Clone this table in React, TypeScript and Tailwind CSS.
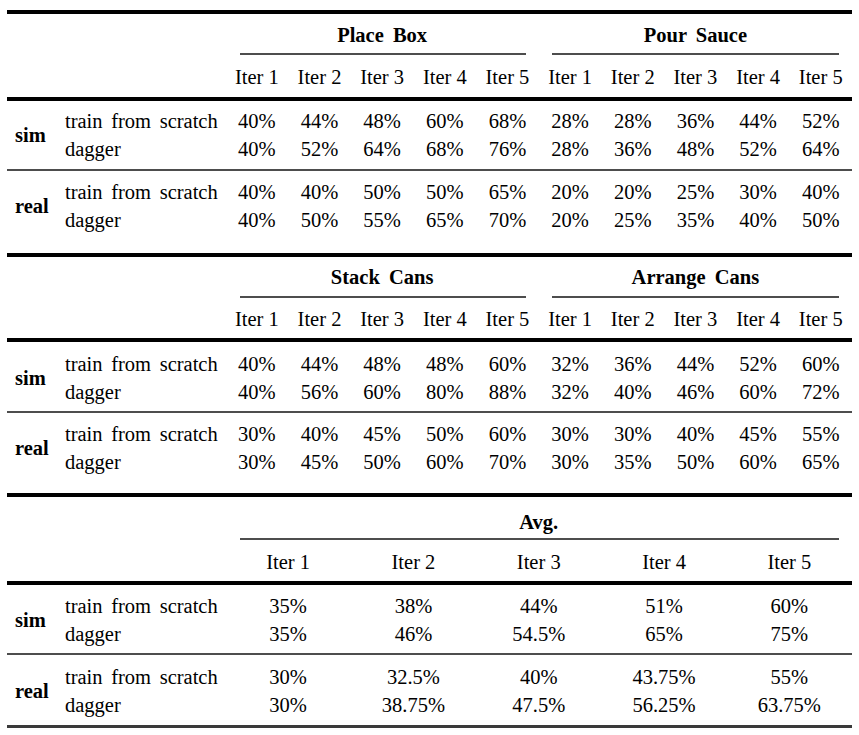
import React from "react";

type Group = { label: string; rows: { name: string; values: string[] }[] };

interface TableSpec {
  titles: string[];
  iters: string[];
  groups: Group[];
  pads: {
    title: string;
    iter: string;
    first: string;
    second: string;
  };
}

const ITERS5 = ["Iter 1", "Iter 2", "Iter 3", "Iter 4", "Iter 5"];

const pct = (xs: (number | string)[]) => xs.map((x) => `${x}%`);

const TABLES: TableSpec[] = [
  {
    titles: ["Place Box", "Pour Sauce"],
    iters: [...ITERS5, ...ITERS5],
    groups: [
      {
        label: "sim",
        rows: [
          { name: "train from scratch", values: pct([40, 44, 48, 60, 68, 28, 28, 36, 44, 52]) },
          { name: "dagger", values: pct([40, 52, 64, 68, 76, 28, 36, 48, 52, 64]) },
        ],
      },
      {
        label: "real",
        rows: [
          { name: "train from scratch", values: pct([40, 40, 50, 50, 65, 20, 20, 25, 30, 40]) },
          { name: "dagger", values: pct([40, 50, 55, 65, 70, 20, 25, 35, 40, 50]) },
        ],
      },
    ],
    pads: {
      title: "h-[39px] pt-[9px]",
      iter: "h-[42px] pt-[10px]",
      first: "pt-[6px] pb-[6px]",
      second: "pt-[7px] pb-[19px]",
    },
  },
  {
    titles: ["Stack Cans", "Arrange Cans"],
    iters: [...ITERS5, ...ITERS5],
    groups: [
      {
        label: "sim",
        rows: [
          { name: "train from scratch", values: pct([40, 44, 48, 48, 60, 32, 36, 44, 52, 60]) },
          { name: "dagger", values: pct([40, 56, 60, 80, 88, 32, 40, 46, 60, 72]) },
        ],
      },
      {
        label: "real",
        rows: [
          { name: "train from scratch", values: pct([30, 40, 45, 50, 60, 30, 30, 40, 45, 55]) },
          { name: "dagger", values: pct([30, 45, 50, 60, 70, 30, 35, 50, 60, 65]) },
        ],
      },
    ],
    pads: {
      title: "h-[39px] pt-[8px]",
      iter: "h-[40px] pt-[9px]",
      first: "pt-[8px] pb-[5px]",
      second: "pt-[7px] pb-[17px]",
    },
  },
  {
    titles: ["Avg."],
    iters: ITERS5,
    groups: [
      {
        label: "sim",
        rows: [
          { name: "train from scratch", values: pct([35, 38, 44, 51, 60]) },
          { name: "dagger", values: pct([35, 46, "54.5", 65, 75]) },
        ],
      },
      {
        label: "real",
        rows: [
          { name: "train from scratch", values: pct([30, "32.5", 40, "43.75", 55]) },
          { name: "dagger", values: pct([30, "38.75", "47.5", "56.25", "63.75"]) },
        ],
      },
    ],
    pads: {
      title: "h-[41px] pt-[13px]",
      iter: "h-[41px] pt-[10px]",
      first: "pt-[7px] pb-[5px]",
      second: "pt-[8px] pb-[6px]",
    },
  },
];

function ThickRule() {
  return <div className="h-[4px] bg-black" />;
}

function ThinRule() {
  return <div className="h-[2px] bg-[#4d4d4d]" />;
}

function Block({ spec, last }: { spec: TableSpec; last: boolean }) {
  return (
    <div>
      {/* group titles */}
      <div className={`flex ${spec.pads.title}`}>
        <div className="w-[218.5px] shrink-0" />
        {spec.titles.map((t) => (
          <div key={t} className="flex-1 text-center font-bold leading-[24px] [word-spacing:4px]">
            {t}
          </div>
        ))}
      </div>

      {/* cmidrules */}
      <div className="flex">
        <div className="w-[218.5px] shrink-0" />
        {spec.titles.map((t, i) => (
          <div key={t} className={`flex-1 ${i === 0 ? "pl-[14px] pr-[13px]" : "px-[13px]"}`}>
            <div className="h-[2px] bg-[#4d4d4d]" />
          </div>
        ))}
      </div>

      {/* iter header */}
      <div className={`flex ${spec.pads.iter}`}>
        <div className="w-[218.5px] shrink-0" />
        {spec.iters.map((it, i) => (
          <div key={i} className="flex-1 text-center leading-[24px]">
            {it}
          </div>
        ))}
      </div>

      <ThickRule />

      {spec.groups.map((g, gi) => (
        <div key={g.label}>
          <div className={`flex ${gi === 0 ? spec.pads.first : spec.pads.second}`}>
            <div className="flex w-[50px] shrink-0 items-center pl-[8px] font-bold">{g.label}</div>
            <div className="flex-1">
              {g.rows.map((r) => (
                <div key={r.name} className="flex h-[28px] items-center leading-[28px]">
                  <div className="w-[168.5px] shrink-0 pl-[8px] [word-spacing:3.5px]">{r.name}</div>
                  {r.values.map((v, vi) => (
                    <div key={vi} className="flex-1 text-center">
                      {v}
                    </div>
                  ))}
                </div>
              ))}
            </div>
          </div>
          {gi === 0 && <ThinRule />}
        </div>
      ))}

      {last ? <div className="h-[3px] bg-[#3a3a3a]" /> : <ThickRule />}
    </div>
  );
}

export default function App() {
  return (
    <div className="h-[735px] w-[859px] bg-white pt-[10px] font-['Liberation_Serif','Times_New_Roman',serif] text-[20.5px] text-black">
      <div className="ml-[7px] w-[845px]">
        <ThickRule />
        {TABLES.map((t, i) => (
          <Block key={i} spec={t} last={i === TABLES.length - 1} />
        ))}
      </div>
    </div>
  );
}
